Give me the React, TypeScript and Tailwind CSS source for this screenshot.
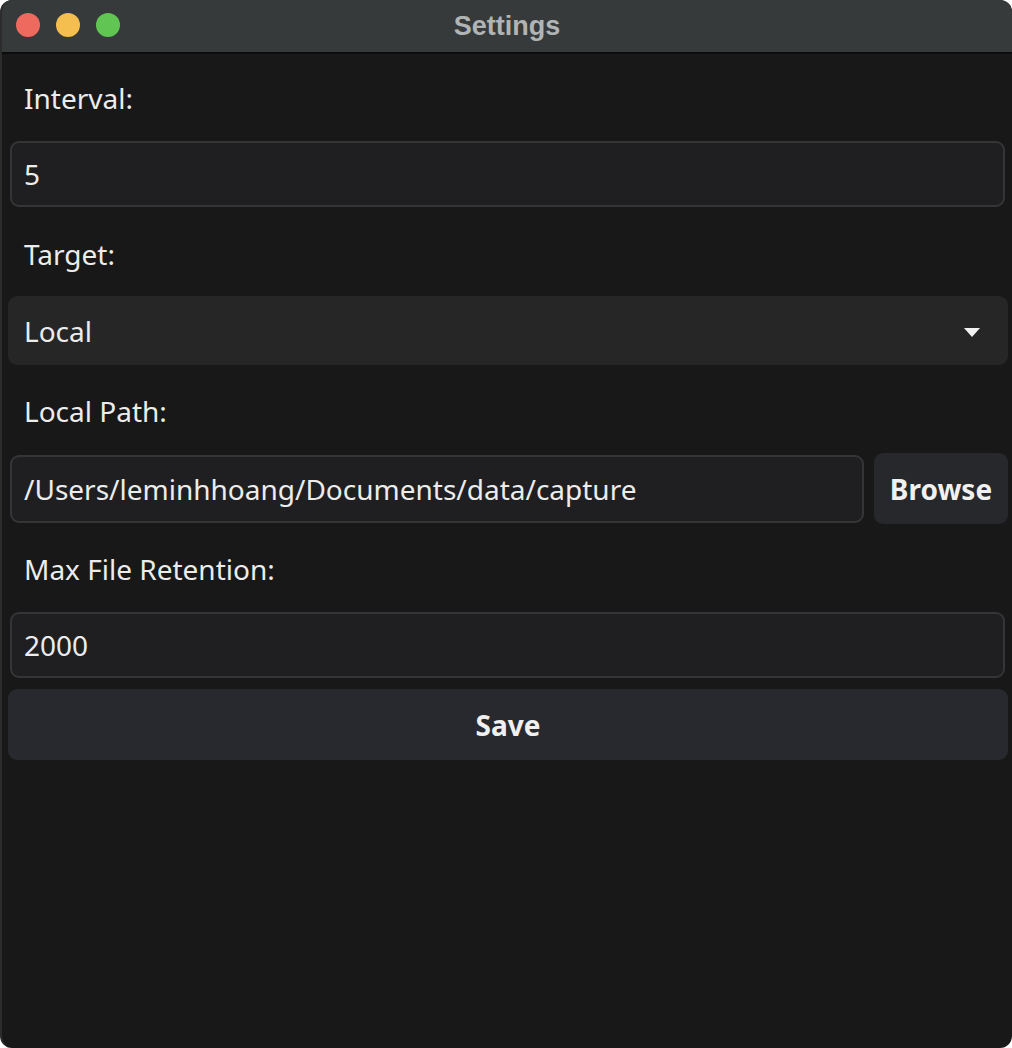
import React, { useState } from "react";

const Label: React.FC<{ text: string; cls: string }> = ({ text, cls }) => (
  <div className={`${cls} flex items-center pl-[22px] text-[28px] text-[#ececec]`}>{text}</div>
);

const inputCls =
  "h-[66px] w-full rounded-[9px] border-2 border-[#353537] bg-[#1f1f21] px-[12px] text-[28px] text-[#ececec] outline-none";

const App: React.FC = () => {
  const [interval, setIntervalValue] = useState("5");
  const [target, setTarget] = useState("Local");
  const [path, setPath] = useState("/Users/leminhhoang/Documents/data/capture");
  const [retention, setRetention] = useState("2000");

  return (
    <div
      className="h-[1048px] w-[1012px] overflow-hidden rounded-[12px] bg-[#181818] border-l-2 border-[#2c2c2c]"
      style={{ fontFamily: '"Noto Sans", "Open Sans", sans-serif' }}
    >
      {/* Title bar */}
      <div className="relative flex h-[54px] items-center justify-center border-b-2 border-[#0c0c0c] bg-[#373a3b]">
        <div className="absolute left-[14px] top-[13px] flex gap-[16px]">
          <span className="h-[24px] w-[24px] rounded-full bg-[#ee6a5f]" />
          <span className="h-[24px] w-[24px] rounded-full bg-[#f5bf4f]" />
          <span className="h-[24px] w-[24px] rounded-full bg-[#61c554]" />
        </div>
        <span
          className="text-[27px] font-bold text-[#b1b4b4]"
          style={{ fontFamily: '"Liberation Sans", Arial, sans-serif' }}
        >
          Settings
        </span>
      </div>

      <div className="flex flex-col">
        <Label text="Interval:" cls="h-[87px] pt-[1px]" />
        <div className="ml-[8px] mr-[7px]">
          <input className={inputCls} value={interval} onChange={(e) => setIntervalValue(e.target.value)} />
        </div>

        <Label text="Target:" cls="h-[89px] pt-[5px]" />
        <div className="relative ml-[6px] mr-[4px]">
          <select
            className="h-[69px] w-full appearance-none rounded-[9px] bg-[#262626] px-[16px] text-[28px] text-[#ececec] outline-none"
            value={target}
            onChange={(e) => setTarget(e.target.value)}
          >
            <option>Local</option>
            <option>S3</option>
          </select>
          <svg
            className="pointer-events-none absolute right-[28px] top-[32px]"
            width="16"
            height="9"
            viewBox="0 0 16 9"
          >
            <path d="M0 0 H16 L8 9 Z" fill="#f2f2f2" />
          </svg>
        </div>

        <Label text="Local Path:" cls="h-[88px] pt-[3px]" />
        <div className="ml-[8px] mr-[4px] flex items-center gap-[10px]">
          <input
            className="h-[68px] flex-1 rounded-[9px] border-2 border-[#353537] bg-[#1f1f21] px-[12px] text-[28px] text-[#ececec] outline-none"
            value={path}
            onChange={(e) => setPath(e.target.value)}
          />
          <button className="h-[71px] w-[134px] rounded-[9px] bg-[#27282c] text-[28px] font-bold text-[#f0f0f0]">
            Browse
          </button>
        </div>

        <Label text="Max File Retention:" cls="h-[88px] pt-[2px]" />
        <div className="ml-[8px] mr-[7px]">
          <input className={inputCls} value={retention} onChange={(e) => setRetention(e.target.value)} />
        </div>

        <div className="ml-[6px] mr-[4px] mt-[11px]">
          <button className="h-[71px] w-full rounded-[9px] bg-[#28292e] text-[28px] font-bold text-[#f0f0f0]">
            Save
          </button>
        </div>
      </div>
    </div>
  );
};

export default App;
